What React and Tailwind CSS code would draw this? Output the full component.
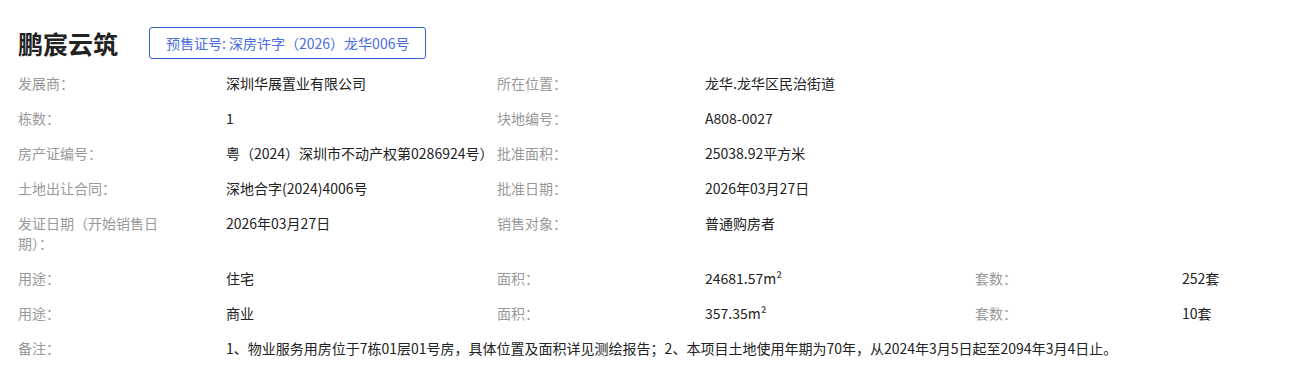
import React from "react";

const rows = [
  ["发展商：", "深圳华展置业有限公司", "所在位置：", "龙华.龙华区民治街道"],
  ["栋数：", "1", "块地编号：", "A808-0027"],
  ["房产证编号：", "粤（2024）深圳市不动产权第0286924号）", "批准面积：", "25038.92平方米"],
  ["土地出让合同：", "深地合字(2024)4006号", "批准日期：", "2026年03月27日"],
  ["发证日期（开始销售日期）：", "2026年03月27日", "销售对象：", "普通购房者"],
];

const usages = [
  ["住宅", "24681.57m²", "252套"],
  ["商业", "357.35m²", "10套"],
];

const Label = ({ children }) => (
  <div className="pr-[56px] text-[#999]">{children}</div>
);

const Value = ({ children, className = "" }) => (
  <div className={`text-[#222] ${className}`}>{children}</div>
);

export default function App() {
  return (
    <div
      className="w-[1290px] h-[368px] bg-white pl-[18px] pt-[27px] text-[14px] leading-[20px] overflow-hidden"
      style={{ fontFamily: '"Noto Sans CJK SC", "Noto Sans", sans-serif' }}
    >
      {/* header */}
      <div className="flex items-center gap-[31px]">
        <h1 className="text-[25px] leading-[32px] font-bold text-[#222]">鹏宸云筑</h1>
        <div className="h-[32px] flex items-center px-[16px] border border-[#2f63d6] rounded-[3px] text-[#4a6ee0]">
          预售证号:&nbsp;深房许字（2026）龙华006号
        </div>
      </div>

      {/* details */}
      <div className="mt-[14px] grid grid-cols-[208px_271px_208px_270px_207px_1fr] gap-y-[15px]">
        {rows.map((r, i) => (
          <React.Fragment key={i}>
            <Label>{r[0]}</Label>
            <Value>{r[1]}</Value>
            <Label>{r[2]}</Label>
            <Value>{r[3]}</Value>
            <div />
            <div />
          </React.Fragment>
        ))}
        {usages.map((u, i) => (
          <React.Fragment key={"u" + i}>
            <Label>用途：</Label>
            <Value>{u[0]}</Value>
            <Label>面积：</Label>
            <Value>{u[1]}</Value>
            <Label>套数：</Label>
            <Value>{u[2]}</Value>
          </React.Fragment>
        ))}
        <Label>备注：</Label>
        <Value className="col-span-5 whitespace-nowrap">
          1、物业服务用房位于7栋01层01号房，具体位置及面积详见测绘报告；2、本项目土地使用年期为70年，从2024年3月5日起至2094年3月4日止。
        </Value>
      </div>
    </div>
  );
}
